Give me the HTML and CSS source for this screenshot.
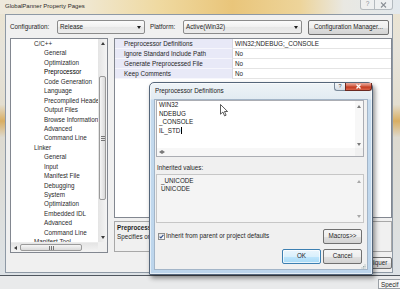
FILE: index.html
```html
<!DOCTYPE html>
<html lang="en">
<head>
<meta charset="utf-8">
<title>GlobalPanner Property Pages</title>
<link rel="stylesheet" href="styles.css">
</head>
<body>
<div class="win">
  <div class="titlebar">
    <span class="title">GlobalPanner Property Pages</span>
    <span class="cap-btns">
      <span class="cap-btn cap-help">?</span>
      <span class="cap-btn cap-close"><svg width="7" height="6" viewBox="0 0 7 6"><path d="M1 0.5L6 5.5M6 0.5L1 5.5" stroke="#8b9097" stroke-width="1.1"/></svg></span>
    </span>
  </div>
  <div class="client">
    <div class="cfg">
      <span class="lbl lbl-cfg">Configuration:</span>
      <span class="combo combo-cfg">Release<i class="dd"></i></span>
      <span class="lbl lbl-plat">Platform:</span>
      <span class="combo combo-plat">Active(Win32)<i class="dd"></i></span>
      <span class="btn btn-cm">Configuration Manager...</span>
    </div>
    <div class="panes">
      <div class="tree">
        <div class="tree-list">
          <div class="ti l1">C/C++</div>
          <div class="ti l2">General</div>
          <div class="ti l2">Optimization</div>
          <div class="ti l2 sel">Preprocessor</div>
          <div class="ti l2">Code Generation</div>
          <div class="ti l2">Language</div>
          <div class="ti l2">Precompiled Headers</div>
          <div class="ti l2">Output Files</div>
          <div class="ti l2">Browse Information</div>
          <div class="ti l2">Advanced</div>
          <div class="ti l2">Command Line</div>
          <div class="ti l1">Linker</div>
          <div class="ti l2">General</div>
          <div class="ti l2">Input</div>
          <div class="ti l2">Manifest File</div>
          <div class="ti l2">Debugging</div>
          <div class="ti l2">System</div>
          <div class="ti l2">Optimization</div>
          <div class="ti l2">Embedded IDL</div>
          <div class="ti l2">Advanced</div>
          <div class="ti l2">Command Line</div>
          <div class="ti l1">Manifest Tool</div>
        </div>
        <div class="vscroll">
          <span class="sb-btn"><i class="tri up"></i></span>
          <span class="vthumb"><i class="grip-h"></i></span>
          <span class="sb-btn sb-end"><i class="tri down"></i></span>
        </div>
        <div class="hscroll">
          <span class="sb-btn"><i class="tri left"></i></span>
          <span class="hthumb"><i class="grip-v"></i></span>
          <span class="sb-btn sb-end"><i class="tri right"></i></span>
        </div>
        <div class="corner"></div>
      </div>
      <div class="right">
        <div class="grid">
          <div class="row"><span class="name">Preprocessor Definitions</span><span class="val">WIN32;NDEBUG;_CONSOLE</span></div>
          <div class="row"><span class="name">Ignore Standard Include Path</span><span class="val">No</span></div>
          <div class="row"><span class="name">Generate Preprocessed File</span><span class="val">No</span></div>
          <div class="row"><span class="name">Keep Comments</span><span class="val">No</span></div>
        </div>
        <div class="desc">
          <div class="desc-title">Preprocessor Definitions</div>
          <div class="desc-text">Specifies one or more preprocessor defines.</div>
        </div>
      </div>
    </div>
    <div class="btnrow">
      <span class="btn btn-main">OK</span>
      <span class="btn btn-main">Cancel</span>
      <span class="btn btn-main">Appliquer</span>
    </div>
  </div>
</div>
<div class="strip"><span class="specif">Specif</span></div>

<div class="dlg">
  <div class="dlg-title">
    <span class="dlg-caption">Preprocessor Definitions</span>
    <span class="dlg-help">?</span>
    <span class="dlg-close"><svg width="7" height="5" viewBox="0 0 7 5"><path d="M1.5 0.5L5.5 4.5M5.5 0.5L1.5 4.5" stroke="#fff" stroke-width="1.3"/></svg></span>
  </div>
  <div class="dlg-client">
    <div class="tbox">
      <div class="tb-top">
        <div class="tb-text">WIN32<br>NDEBUG<br>_CONSOLE<br>IL_STD<span class="caret"></span></div>
        <div class="tb-v"><i class="tri up lt"></i><i class="tri down lt"></i></div>
      </div>
      <div class="tb-bot">
        <div class="tb-h"><i class="tri left lt"></i><i class="tri right lt"></i></div>
        <div class="tb-corner"></div>
      </div>
    </div>
    <div class="lbl-inh">Inherited values:</div>
    <div class="ibox">
      <div class="ib-text">_UNICODE<br>UNICODE</div>
      <div class="ib-v"><i class="tri up pale"></i><i class="tri down pale"></i></div>
    </div>
    <div class="chkrow">
      <span class="chk"><svg width="5" height="5" viewBox="0 0 5 5"><path d="M0.6 2.6L1.9 3.9L4.4 0.8" stroke="#33508a" stroke-width="1.1" fill="none"/></svg></span>
      <span class="chk-lbl">Inherit from parent or project defaults</span>
      <span class="btn dbtn btn-macros">Macros&gt;&gt;</span>
    </div>
    <div class="okrow">
      <span class="btn dbtn btn-ok">OK</span>
      <span class="btn dbtn">Cancel</span>
    </div>
    <svg class="grip" width="5" height="5" viewBox="0 0 5 5"><rect x="3.5" y="0.5" width="1" height="1" fill="#9aa"/><rect x="2" y="2" width="1" height="1" fill="#9aa"/><rect x="3.5" y="2" width="1" height="1" fill="#9aa"/><rect x="0.5" y="3.5" width="1" height="1" fill="#9aa"/><rect x="2" y="3.5" width="1" height="1" fill="#9aa"/><rect x="3.5" y="3.5" width="1" height="1" fill="#9aa"/></svg>
  </div>
</div>

<svg class="cursor" width="9" height="13" viewBox="0 0 9 13"><path d="M0.5 0.5L0.5 10.2L2.9 8L4.6 11.9L6.1 11.2L4.5 7.5L7.6 7.5Z" fill="#fff" stroke="#333" stroke-width="0.8" stroke-linejoin="round"/></svg>
</body>
</html>
```

FILE: styles.css
```css
* { box-sizing: border-box; margin: 0; padding: 0; }
html, body { width: 400px; height: 289px; }
body {
  position: relative;
  overflow: hidden;
  background: #e6e7e8;
  font-family: "Liberation Sans", Arial, sans-serif;
  font-size: 6.3px;
  color: #1e1e1e;
  line-height: 1;
}

/* main window */
.win {
  width: 400px;
  height: 276px;
  display: flex;
  flex-direction: column;
  background: linear-gradient(180deg, #ece4cf 0, #e6e3da 18%, #e3ded0 38%, #d9ae62 44%, #dddad0 50%, #dde2e6 100%);
  border-bottom: 1px solid #50565e;
}
.titlebar {
  height: 14px;
  flex: none;
  display: flex;
  align-items: flex-start;
  padding-left: 5px;
  background: linear-gradient(90deg, #ede8dc 0, #f0e7cf 22%, #efd9a0 40%, #e9c57a 58%, #edd49a 75%, #e9e8e2 86%, #e3e9ed 100%);
}
.title { line-height: 12px; font-size: 6px; color: #2a2a2a; }
.cap-btns { margin-left: auto; margin-right: 7px; display: flex; }
.cap-btn {
  height: 10px;
  display: flex;
  align-items: center;
  justify-content: center;
  border: 1px solid rgba(110, 120, 130, .45);
  border-top: 0;
  background: rgba(255, 255, 255, .35);
  color: #8b9097;
  font-size: 6.5px;
}
.cap-help { width: 14px; border-radius: 0 0 0 3px; border-right: 0; }
.cap-close { width: 19px; border-radius: 0 0 3px 0; }

.client {
  margin-left: 5px;
  width: 388px;
  height: 259px;
  flex: none;
  border: 1px solid #8e99a5;
  background: #f0f0f0;
  display: flex;
  flex-direction: column;
}

.cfg { display: flex; align-items: flex-start; margin-top: 5px; padding-left: 4px; height: 15px; flex: none; }
.lbl { line-height: 14px; white-space: nowrap; }
.lbl-cfg { width: 47px; }
.lbl-plat { width: 33px; margin-left: 5px; }
.combo {
  position: relative;
  height: 14px;
  line-height: 12px;
  padding-left: 2px;
  border: 1px solid #8b8b8b;
  border-radius: 2px;
  background: linear-gradient(180deg, #fbfbfb, #f0f0f0 50%, #e6e6e6 51%, #ececec);
  white-space: nowrap;
}
.combo-cfg { width: 88px; }
.combo-plat { width: 119px; }
.dd {
  position: absolute;
  right: 3px;
  top: 5px;
  width: 0;
  height: 0;
  border-left: 2.5px solid transparent;
  border-right: 2.5px solid transparent;
  border-top: 3px solid #1e1e1e;
}
.btn {
  display: flex;
  align-items: center;
  justify-content: center;
  border: 1px solid #707070;
  border-radius: 2px;
  background: linear-gradient(180deg, #f5f5f5 0, #eeeeee 50%, #e0e0e0 51%, #d3d3d3 100%);
  white-space: nowrap;
  overflow: hidden;
  flex: none;
}
.btn-cm { margin-left: 6px; width: 81px; height: 15px; }

.panes { display: flex; gap: 6px; margin-top: 3px; padding-left: 4px; height: 215px; flex: none; }

/* tree */
.tree {
  width: 98px;
  height: 215px;
  flex: none;
  border: 1px solid #828790;
  background: #fff;
  display: grid;
  grid-template-columns: 87px 9px;
  grid-template-rows: 203px 10px;
  overflow: hidden;
}
.tree-list { overflow: hidden; min-height: 0; min-width: 0; }
.ti { height: 9.45px; line-height: 9.45px; white-space: nowrap; color: #2a2a2a; }
.l1 { padding-left: 23px; }
.l2 { padding-left: 33px; }
.sel { color: #000; }

.vscroll {
  grid-row: 1; grid-column: 2;
  display: flex; flex-direction: column;
  background: linear-gradient(90deg, #e4e4e4, #f4f4f4);
  min-height: 0;
}
.hscroll {
  grid-row: 2; grid-column: 1;
  display: flex;
  min-width: 0;
  background: linear-gradient(180deg, #e4e4e4, #f4f4f4);
  border-top: 1px solid #ececec;
}
.corner { grid-row: 2; grid-column: 2; background: #f0f0f0; }
.sb-btn { flex: none; width: 9px; height: 9px; display: flex; align-items: center; justify-content: center; }
.vscroll .sb-btn { width: auto; }
.hscroll .sb-btn { height: auto; }
.hscroll .sb-end { margin-left: auto; }
.vscroll .sb-end { margin-top: auto; }
.vthumb {
  height: 124px;
  margin: 28px 1px 0;
  border: 1px solid #9a9a9a;
  border-radius: 2px;
  background: linear-gradient(90deg, #f6f6f6, #d9d9d9);
  display: flex; align-items: center; justify-content: center;
  flex: none;
}
.hthumb {
  width: 62px;
  margin: 1px 0;
  border: 1px solid #9a9a9a;
  border-radius: 2px;
  background: linear-gradient(180deg, #f6f6f6, #d9d9d9);
  display: flex; align-items: center; justify-content: center;
  flex: none;
}
.grip-h { display: block; width: 4px; height: 5px; background: repeating-linear-gradient(180deg, #777 0 1px, transparent 1px 2px); }
.grip-v { display: block; width: 5px; height: 4px; background: repeating-linear-gradient(90deg, #777 0 1px, transparent 1px 2px); }

.tri { display: block; flex: none; width: 0; height: 0; border-style: solid; border-color: transparent; }
.tri.up { border-width: 0 2.5px 3px; border-bottom-color: #3c3c3c; }
.tri.down { border-width: 3px 2.5px 0; border-top-color: #3c3c3c; }
.tri.left { border-width: 2.5px 3px 2.5px 0; border-right-color: #3c3c3c; }
.tri.right { border-width: 2.5px 0 2.5px 3px; border-left-color: #3c3c3c; }
.tri.lt.up { border-bottom-color: #7a7a7a; }
.tri.lt.down { border-top-color: #7a7a7a; }
.tri.lt.left { border-right-color: #7a7a7a; }
.tri.lt.right { border-left-color: #7a7a7a; }
.tri.pale.up { border-bottom-color: #a8a8a8; }
.tri.pale.down { border-top-color: #a8a8a8; }

/* property grid */
.right { width: 278px; flex: none; display: flex; flex-direction: column; gap: 3px; }
.grid { height: 180px; border: 1px solid #828790; background: #fff; flex: none; }
.row { display: flex; height: 10px; line-height: 9px; }
.name {
  width: 117px;
  flex: none;
  padding-left: 9px;
  background: #e8e9f7;
  border-bottom: 1px solid #f6f6fc;
  white-space: nowrap;
  overflow: hidden;
}
.val {
  flex: 1;
  padding-left: 2px;
  border-bottom: 1px solid #e4e4e4;
  border-left: 1px solid #d8d8e0;
  white-space: nowrap;
}
.desc { height: 31px; border: 1px solid #a8a8a8; background: #f0f0f0; padding: 2px 2px 0; flex: none; overflow: hidden; }
.desc-title { font-weight: bold; line-height: 8px; white-space: nowrap; }
.desc-text { line-height: 9px; white-space: nowrap; }

.btnrow { display: flex; justify-content: flex-end; gap: 3px; margin-top: 4px; height: 12px; flex: none; }
.btn-main { width: 36px; height: 12px; }

/* strip below */
.strip {
  height: 13px;
  display: flex;
  justify-content: flex-end;
  align-items: flex-start;
  padding-top: 3px;
  background: #e9eaeb;
}
.specif {
  width: 22px;
  height: 10px;
  border: 1px solid #9aa0a6;
  border-right: 0;
  background: #f7f7f7;
  padding-left: 2px;
  line-height: 9px;
  overflow: hidden;
  white-space: nowrap;
}

/* dialog window */
.dlg {
  position: absolute;
  left: 149px;
  top: 82px;
  width: 224px;
  height: 193px;
  display: flex;
  flex-direction: column;
  padding: 0 4px 4px;
  border: 1px solid #55667a;
  border-radius: 5px 5px 1px 1px;
  background: linear-gradient(180deg, #eef3f7 0, #e2ebf2 16px, #c6dbee 17px, #bcd5ec 100%);
  box-shadow: 2px 3px 5px rgba(0, 0, 0, .45), inset 0 0 0 1px rgba(255, 255, 255, .6);
}
.dlg-title { height: 16px; flex: none; display: flex; align-items: flex-start; }
.dlg-caption { line-height: 15px; padding-left: 1px; color: #222; white-space: nowrap; }
.dlg-help {
  margin-left: auto;
  width: 11px;
  height: 8px;
  border: 1px solid #7b8a9a;
  border-top: 0;
  border-right: 0;
  border-radius: 0 0 0 3px;
  background: linear-gradient(#f4f7fa, #d5dde6);
  font-size: 5.5px;
  line-height: 7px;
  text-align: center;
  color: #444;
}
.dlg-close {
  width: 27px;
  height: 8px;
  margin-right: -4px;
  border: 1px solid #6b2a22;
  border-top: 0;
  border-radius: 0 0 3px 0;
  background: linear-gradient(180deg, #e9a99c 0, #d4664f 45%, #c23a1f 55%, #d8624a 100%);
  display: flex;
  align-items: center;
  justify-content: center;
}
.dlg-client {
  flex: 1;
  display: flex;
  flex-direction: column;
  background: #f0f0f0;
  padding: 0 0 0 1px;
  border: 1px solid #a3b5c8;
  min-height: 0;
}
.tbox {
  width: 208px;
  height: 57px;
  flex: none;
  border: 1px solid #abadb3;
  background: #fff;
  display: flex;
  flex-direction: column;
  overflow: hidden;
}
.tb-top { height: 47px; display: flex; flex: none; }
.tb-bot { height: 8px; display: flex; flex: none; }
.tb-text { width: 198px; flex: none; padding-left: 2px; line-height: 8.7px; white-space: nowrap; color: #1a1a1a; overflow: hidden; }
.caret { display: inline-block; width: 1px; height: 7px; background: #000; vertical-align: -1px; margin-left: 0.5px; }
.tb-v {
  width: 8px;
  flex: none;
  display: flex; flex-direction: column; align-items: center; justify-content: space-between;
  padding: 4px 0 2px;
  background: #f7f7f7;
}
.tb-h {
  width: 198px;
  flex: none;
  display: flex; align-items: center; justify-content: space-between;
  padding: 0 4px 0 2px;
  background: #f7f7f7;
}
.tb-corner { width: 8px; flex: none; background: #f0f0f0; }
.lbl-inh { margin-top: 7px; padding-left: 1px; line-height: 8px; flex: none; }
.ibox {
  margin-top: 2px;
  width: 208px;
  height: 49px;
  flex: none;
  border: 1px solid #c6c6c6;
  background: #f4f4f4;
  display: flex;
}
.ib-text { flex: 1; padding: 2px 0 0 4px; line-height: 8px; }
.ib-v { width: 8px; flex: none; display: flex; flex-direction: column; align-items: center; justify-content: space-between; padding: 5px 0 4px; }
.chkrow { margin-top: 6px; height: 15px; display: flex; align-items: center; flex: none; }
.chk {
  width: 7px; height: 7px;
  flex: none;
  margin-left: 2px;
  border: 1px solid #8e8f8f;
  background: linear-gradient(135deg, #e2e2e2, #fff);
  display: flex; align-items: center; justify-content: center;
}
.chk-lbl { margin-left: 1px; white-space: nowrap; }
.dbtn { width: 39px; height: 15px; }
.btn-macros { margin-left: auto; margin-right: 5px; }
.okrow { margin-top: 5px; height: 15px; display: flex; justify-content: flex-end; gap: 2px; padding-right: 5px; flex: none; }
.btn-ok {
  border-color: #3c7fb1;
  background: linear-gradient(180deg, #eaf6fd 0, #d9f0fc 50%, #bee6fd 51%, #a7d9f5 100%);
  box-shadow: inset 0 0 0 1px rgba(255, 255, 255, .7);
}
.grip { align-self: flex-end; margin-top: auto; margin-right: 1px; margin-bottom: 1px; flex: none; }

.cursor { position: absolute; left: 220px; top: 104px; }
```
